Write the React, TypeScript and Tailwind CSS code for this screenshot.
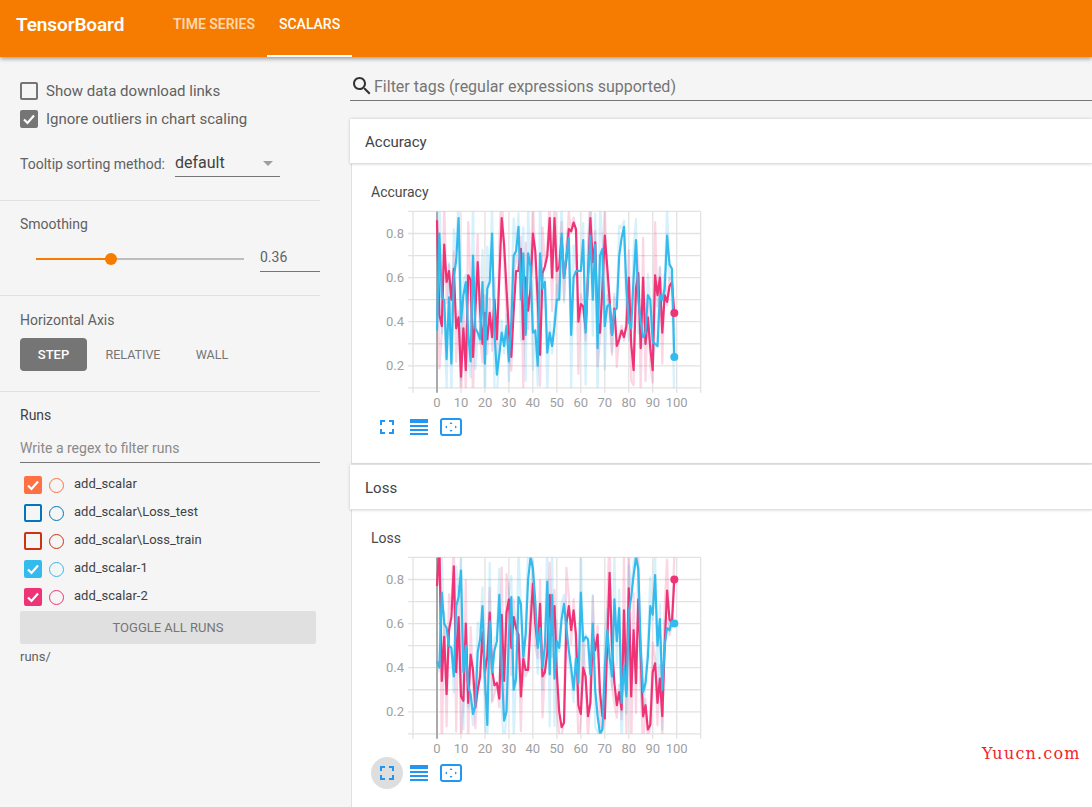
import React from "react";

const accPink = [.86,.43,.38,.75,.58,.63,.5,.64,.37,.42,.15,.37,.18,.61,.59,.24,.45,.67,.45,.3,.44,.32,.44,.33,.5,.32,.6,.87,.75,.55,.35,.24,.45,.63,.63,.73,.32,.6,.45,.55,.8,.72,.5,.25,.62,.65,.7,.87,.6,.87,.63,.65,.78,.6,.68,.82,.81,.85,.82,.4,.48,.47,.37,.6,.87,.67,.76,.4,.35,.55,.79,.65,.5,.34,.46,.29,.32,.36,.33,.38,.6,.3,.18,.55,.62,.28,.6,.3,.42,.28,.18,.61,.52,.6,.35,.52,.49,.56,.58,.44];
const accBlue = [.36,.8,.51,.5,.23,.51,.21,.6,.68,.87,.4,.52,.58,.35,.22,.7,.37,.35,.32,.58,.21,.55,.58,.8,.35,.16,.25,.35,.29,.38,.22,.4,.7,.72,.83,.5,.71,.34,.71,.65,.35,.36,.2,.71,.55,.58,.26,.35,.29,.38,.5,.5,.8,.6,.7,.78,.34,.6,.63,.63,.63,.77,.35,.6,.79,.5,.75,.28,.7,.73,.38,.47,.48,.34,.45,.46,.7,.78,.83,.55,.4,.37,.6,.77,.5,.4,.33,.35,.52,.5,.31,.3,.29,.52,.5,.55,.79,.66,.64,.24];
const lossPink = [.77,.95,.34,.54,.28,.57,.63,.86,.38,.63,.27,.25,.6,.24,.46,.39,.22,.3,.36,.56,.38,.45,.65,.39,.32,.33,.26,.64,.34,.65,.71,.49,.63,.58,.55,.27,.44,.39,.39,.6,.78,.6,.5,.69,.36,.38,.47,.73,.55,.68,.38,.2,.13,.15,.6,.68,.57,.66,.55,.23,.19,.4,.36,.18,.24,.55,.48,.55,.29,.18,.17,.5,.83,.5,.33,.23,.29,.21,.66,.3,.76,.27,.57,.33,.71,.46,.18,.23,.12,.14,.38,.42,.24,.35,.18,.5,.75,.62,.6,.8];
const lossBlue = [.43,.4,.74,.6,.58,.5,.49,.36,.68,.72,.84,.38,.5,.32,.28,.19,.23,.47,.53,.68,.36,.14,.61,.38,.48,.52,.73,.4,.16,.2,.55,.72,.3,.35,.72,.69,.45,.55,.8,.9,.85,.7,.49,.58,.4,.5,.79,.37,.73,.35,.52,.49,.62,.69,.58,.48,.4,.3,.44,.33,.74,.52,.54,.53,.37,.6,.3,.18,.1,.12,.4,.57,.45,.36,.71,.52,.67,.24,.41,.27,.65,.72,.82,.9,.85,.5,.29,.33,.45,.68,.64,.82,.5,.62,.3,.5,.58,.57,.61,.6];

const PINK = "#ee3377";
const BLUE = "#33bbee";
const fx = (s: number) => 66 + s * 2.397;
const fy = (v: number) => 27.5 + (0.8 - v) * 220.5;
const toPath = (a: number[]) => a.map((v, i) => `${i ? "L" : "M"}${fx(i).toFixed(1)} ${fy(v).toFixed(1)}`).join("");
const raw = (a: number[]) => a.map((v, i) => (i === 0 ? v : (v - 0.36 * a[i - 1]) / 0.64));

function Chart({ id, pink, blue }: { id: string; pink: number[]; blue: number[] }) {
  const hs = [.9, .8, .7, .6, .5, .4, .3, .2, .1];
  const vs = [-10, 0, 10, 20, 30, 40, 50, 60, 70, 80, 90, 100, 110];
  return (
    <svg width={340} height={210} className="block">
      <defs>
        <clipPath id={id}>
          <rect x={42} y={fy(.9)} width={288} height={fy(.1) - fy(.9)} />
        </clipPath>
      </defs>
      {hs.map((v) => (
        <line key={v} x1={37} x2={330} y1={fy(v)} y2={fy(v)} stroke="#e2e2e2" strokeWidth={1.3} />
      ))}
      {vs.map((s) => (
        <line key={s} x1={fx(s)} x2={fx(s)} y1={fy(.9)} y2={fy(.1) + 5} stroke={s === 0 ? "#aaaaaa" : "#e2e2e2"} strokeWidth={s === 0 ? 2 : 1.3} />
      ))}
      {[.8, .6, .4, .2].map((v) => (
        <text key={v} x={33} y={fy(v) + 4} textAnchor="end" fontSize={13} fill="#a0a0a0" fontFamily="Roboto, sans-serif">{v.toFixed(1)}</text>
      ))}
      {vs.slice(1, -1).map((s) => (
        <text key={s} x={fx(s)} y={fy(.1) + 19} textAnchor="middle" fontSize={13} fill="#a0a0a0" fontFamily="Roboto, sans-serif">{s}</text>
      ))}
      <g clipPath={`url(#${id})`} fill="none" strokeLinejoin="round">
        <path d={toPath(raw(pink))} stroke={PINK} strokeOpacity={0.2} strokeWidth={2.2} />
        <path d={toPath(raw(blue))} stroke={BLUE} strokeOpacity={0.2} strokeWidth={2.2} />
        <path d={toPath(pink)} stroke={PINK} strokeWidth={2.2} />
        <path d={toPath(blue)} stroke={BLUE} strokeWidth={2.2} />
      </g>
      <circle cx={fx(99)} cy={fy(pink[99])} r={4} fill={PINK} />
      <circle cx={fx(99)} cy={fy(blue[99])} r={4} fill={BLUE} />
    </svg>
  );
}

function ChartIcons({ active }: { active?: boolean }) {
  const c = "#2196f3";
  return (
    <div className="flex items-center h-8">
      <div className={`w-8 h-8 rounded-full flex items-center justify-center ${active ? "bg-[#dedede]" : ""}`}>
        <svg width={14} height={14} viewBox="0 0 14 14" fill="none" stroke={c} strokeWidth={2}>
          <path d="M1 5V1H5M9 1H13V5M13 9V13H9M5 13H1V9" />
        </svg>
      </div>
      <svg width={18} height={16} viewBox="0 0 18 16" fill={c} className="ml-[7px]">
        <rect x={0} y={0} width={18} height={4} />
        <rect x={0} y={6} width={18} height={2} />
        <rect x={0} y={10} width={18} height={2} />
        <rect x={0} y={14} width={18} height={2} />
      </svg>
      <svg width={22} height={18} viewBox="0 0 22 18" fill={c} className="ml-3">
        <rect x={1} y={1} width={20} height={16} rx={2} fill="none" stroke={c} strokeWidth={2} />
        <path d="M11 4l1.5 2h-3zM11 14l1.5-2h-3zM5 9l2-1.5v3zM17 9l-2-1.5v3z" />
      </svg>
    </div>
  );
}

function Box({ checked, color }: { checked?: boolean; color: string }) {
  return (
    <span
      className="w-[18px] h-[18px] rounded-[2px] border-2 flex items-center justify-center shrink-0"
      style={{ borderColor: color, backgroundColor: checked ? color : "transparent" }}
    >
      {checked && (
        <svg width={14} height={14} viewBox="0 0 14 14" fill="none" stroke="#fff" strokeWidth={2.2}>
          <path d="M2 7.5L5.5 11L12 3.5" />
        </svg>
      )}
    </span>
  );
}

const runs: [string, string, boolean][] = [
  ["add_scalar", "#ff7043", true],
  ["add_scalar\\Loss_test", "#0077bb", false],
  ["add_scalar\\Loss_train", "#cc3311", false],
  ["add_scalar-1", "#33bbee", true],
  ["add_scalar-2", "#ee3377", true],
];

function Section({ title, active, pink, blue, id }: { title: string; active?: boolean; pink: number[]; blue: number[]; id: string }) {
  return (
    <section className="flex flex-col">
      <div className="h-[45px] bg-white flex items-center px-[15px] pt-[3px] text-[15px] text-[#424242] border-b border-[#e0e0e0] shadow-[0_0_3px_rgba(0,0,0,0.2)] relative">
        {title}
      </div>
      <div className="bg-white ml-px border-l border-b border-[#e0e0e0] pl-[19px] pt-[19px] h-[300px]">
        <div className="text-[14px] leading-[18px] text-[#4a4a4a]">{title}</div>
        <div className="mt-[5px]">
          <Chart id={id} pink={pink} blue={blue} />
        </div>
        <div className="-mt-[5px]">
          <ChartIcons active={active} />
        </div>
      </div>
    </section>
  );
}

export default function App() {
  return (
    <div className="relative w-[1092px] h-[807px] overflow-hidden flex flex-col bg-[#f5f5f5] text-[#616161] font-['Roboto',sans-serif]">
      <header className="h-[57px] shrink-0 bg-[#f57c00] flex items-stretch text-white shadow-[0_2px_4px_rgba(0,0,0,0.35)] relative z-10">
        <div className="pl-4 w-[161px] flex items-center text-[19px] font-semibold tracking-[-0.1px] pb-[7px]">TensorBoard</div>
        <div className="w-[82px] px-3 flex items-center text-[14px] font-semibold text-[#fdd7ad] box-content pb-[9px] whitespace-nowrap">TIME SERIES</div>
        <div className="w-[61px] px-3 box-content flex items-center text-[14px] font-medium border-b-2 border-white pb-[7px]">SCALARS</div>
      </header>
      <div className="flex flex-1 min-h-0">
        <aside className="w-[350px] shrink-0">
          <div className="w-[320px]">
            <div className="h-[144px] pl-5 pt-[25px] border-b border-[#e0e0e0]">
              <label className="flex items-center gap-2 h-[18px] text-[15px] text-[#616161]"><Box color="#757575" />Show data download links</label>
              <label className="flex items-center gap-2 h-[18px] mt-[10px] text-[15px] text-[#616161]"><Box color="#757575" checked />Ignore outliers in chart scaling</label>
              <div className="flex items-start mt-[20px] text-[14px]">
                <span className="mt-[7px] leading-[18px] whitespace-nowrap">Tooltip sorting method:</span>
                <div className="ml-[10px] w-[105px] h-[29px] pt-[2px] border-b border-[#757575] flex items-center justify-between text-[16px] pr-[7px] text-[#424242]">
                  default
                  <span className="w-0 h-0 border-x-[5px] border-x-transparent border-t-[5px] border-t-[#9e9e9e]" />
                </div>
              </div>
            </div>
            <div className="h-[95px] pl-5 pt-[13px] border-b border-[#e0e0e0]">
              <div className="text-[14px] leading-[20px]">Smoothing</div>
              <div className="flex items-start mt-[11px]">
                <div className="w-[208px] ml-4 h-3 mt-[8px] flex items-center relative">
                  <div className="w-[75px] h-[2px] bg-[#f57c00]" />
                  <div className="flex-1 h-[2px] bg-[#bdbdbd]" />
                  <div className="absolute left-[69px] top-0 w-3 h-3 rounded-full bg-[#f57c00]" />
                </div>
                <div className="ml-4 w-[60px] h-[27px] border-b border-[#757575] text-[14px] leading-[24px]">0.36</div>
              </div>
            </div>
            <div className="h-[96px] pl-5 pt-[14px] border-b border-[#e0e0e0]">
              <div className="text-[14px] leading-[20px]">Horizontal Axis</div>
              <div className="flex mt-[8px] text-[12.5px] text-[#757575] h-[33px] items-center">
                <div className="w-[67px] h-[33px] rounded bg-[#757575] text-white text-[13px] font-medium flex items-center justify-center">STEP</div>
                <div className="w-[92px] text-center pt-[2px]">RELATIVE</div>
                <div className="w-[66px] text-center pt-[2px]">WALL</div>
              </div>
            </div>
            <div className="pl-5 pt-[13px]">
              <div className="text-[14px] leading-[20px] text-[#424242]">Runs</div>
              <div className="mt-[13px] h-[25px] border-b border-[#757575] text-[14px] text-[#8a8a8a] leading-[20px]">Write a regex to filter runs</div>
              <div className="mt-[13px] flex flex-col gap-[10px] pl-1">
                {runs.map(([n, c, on]) => (
                  <div key={n} className="flex items-center h-[18px] text-[13px] text-[#424242]">
                    <Box color={c} checked={on} />
                    <span className="ml-[7px] w-[15px] h-[15px] rounded-full border-[1.75px] shrink-0" style={{ borderColor: c }} />
                    <span className="ml-[10px] -mt-[2px] whitespace-nowrap">{n}</span>
                  </div>
                ))}
              </div>
              <div className="mt-[5px] w-[296px] h-[33px] rounded-[2px] bg-[#e0e0e0] flex items-center justify-center text-[13px] text-[#757575]">TOGGLE ALL RUNS</div>
              <div className="mt-[5px] text-[13px] leading-[16px] text-[#616161]">runs/</div>
            </div>
          </div>
        </aside>
        <main className="flex-1 min-w-0 flex flex-col">
          <div className="h-[62px] shrink-0 pt-[17px]">
            <div className="h-[27px] border-b border-[#757575] flex items-start text-[16px] text-[#757575] leading-[26px]">
              <svg width={24} height={24} viewBox="0 0 24 24" fill="#333" className="shrink-0">
                <path d="M15.5 14h-.79l-.28-.27C15.41 12.59 16 11.11 16 9.5 16 5.91 13.09 3 9.5 3S3 5.91 3 9.5 5.91 16 9.5 16c1.61 0 3.09-.59 4.23-1.57l.27.28v.79l5 4.99L20.49 19l-4.99-5zm-6 0C7.01 14 5 11.99 5 9.5S7.01 5 9.5 5 14 7.01 14 9.5 11.99 14 9.5 14z" />
              </svg>
              <span>Filter tags (regular expressions supported)</span>
            </div>
          </div>
          <Section title="Accuracy" pink={accPink} blue={accBlue} id="acc" />
          <div className="h-px shrink-0" />
          <Section title="Loss" pink={lossPink} blue={lossBlue} id="loss" active />
        </main>
      </div>
      <div className="absolute left-[982px] top-[743px] text-[16px] leading-[22px] tracking-[1.2px] text-[#f5222d] font-['DejaVu_Serif',serif]">Yuucn.com</div>
    </div>
  );
}
